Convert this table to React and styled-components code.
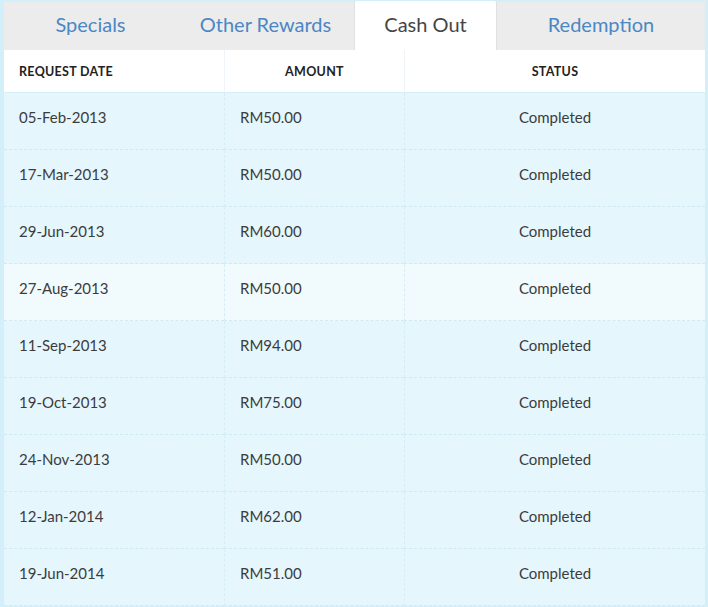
import React from 'react'
import styled, { createGlobalStyle } from 'styled-components'

const GlobalStyle = createGlobalStyle`
    html, body {
        margin: 0;
        padding: 0;
        background: #d3effa;
    }
    body {
        font-family: Lato, "Open Sans", sans-serif;
    }
`

const Frame = styled.div`
    width: 708px;
    height: 607px;
    box-sizing: border-box;
    padding: 1px 3px 0 4px;
    background: #d3effa;
    overflow: hidden;
`

const TabBar = styled.div`
    display: flex;
    height: 48px;
    margin-top: 1px;
    background: #ececec;
`

const Tab = styled.div`
    width: ${(p) => p.width}px;
    display: flex;
    align-items: center;
    justify-content: center;
    box-sizing: border-box;
    padding-bottom: 4px;
    font-size: 20px;
    color: ${(p) => (p.active ? '#454545' : '#4b87c4')};
    background: ${(p) => (p.active ? '#ffffff' : 'transparent')};
    margin-top: ${(p) => (p.active ? '-1px' : '0')};
    height: ${(p) => (p.active ? '49px' : '48px')};
    border-left: ${(p) => (p.active ? '1px solid #e0e0e0' : 'none')};
    border-right: ${(p) => (p.active ? '1px solid #e0e0e0' : 'none')};
    border-radius: ${(p) => (p.active ? '2px 2px 0 0' : '0')};
`

const Table = styled.div`
    display: grid;
    grid-template-columns: 220px 180px 1fr;
`

const HeadCell = styled.div`
    height: 43px;
    box-sizing: border-box;
    display: flex;
    align-items: center;
    justify-content: ${(p) => p.align || 'center'};
    padding-left: ${(p) => (p.align === 'flex-start' ? '15px' : '0')};
    background: #fff;
    font-size: 12.5px;
    font-weight: 700;
    letter-spacing: 0.3px;
    color: #222;
    border-bottom: 1px solid #d6eef7;
    border-left: ${(p) => (p.first ? 'none' : '1px solid #eef4f7')};
`

const Cell = styled.div`
    height: 57px;
    box-sizing: border-box;
    display: flex;
    align-items: center;
    justify-content: ${(p) => (p.center ? 'center' : 'flex-start')};
    padding-left: ${(p) => (p.center ? '0' : '15px')};
    padding-bottom: 8px;
    background: ${(p) => (p.light ? '#f1fafd' : '#e5f6fc')};
    font-size: 15px;
    color: #3c3c3c;
    border-bottom: 1px dashed #cfeaf4;
    border-left: ${(p) => (p.first ? 'none' : '1px dashed #d6edf6')};
`

const tabs = [
    { label: 'Specials', width: 173 },
    { label: 'Other Rewards', width: 177 },
    { label: 'Cash Out', width: 143, active: true },
    { label: 'Redemption', width: 208 },
]

const rows = [
    ['05-Feb-2013', 'RM50.00'],
    ['17-Mar-2013', 'RM50.00'],
    ['29-Jun-2013', 'RM60.00'],
    ['27-Aug-2013', 'RM50.00'],
    ['11-Sep-2013', 'RM94.00'],
    ['19-Oct-2013', 'RM75.00'],
    ['24-Nov-2013', 'RM50.00'],
    ['12-Jan-2014', 'RM62.00'],
    ['19-Jun-2014', 'RM51.00'],
]

export default function App() {
    return (
        <Frame>
            <GlobalStyle />
            <TabBar>
                {tabs.map((t) => (
                    <Tab key={t.label} width={t.width} active={t.active}>
                        {t.label}
                    </Tab>
                ))}
            </TabBar>
            <Table>
                <HeadCell first align="flex-start">REQUEST DATE</HeadCell>
                <HeadCell>AMOUNT</HeadCell>
                <HeadCell>STATUS</HeadCell>
                {rows.map(([date, amount], i) => (
                    <React.Fragment key={date}>
                        <Cell first light={i === 3}>{date}</Cell>
                        <Cell light={i === 3}>{amount}</Cell>
                        <Cell center light={i === 3}>Completed</Cell>
                    </React.Fragment>
                ))}
            </Table>
        </Frame>
    )
}
